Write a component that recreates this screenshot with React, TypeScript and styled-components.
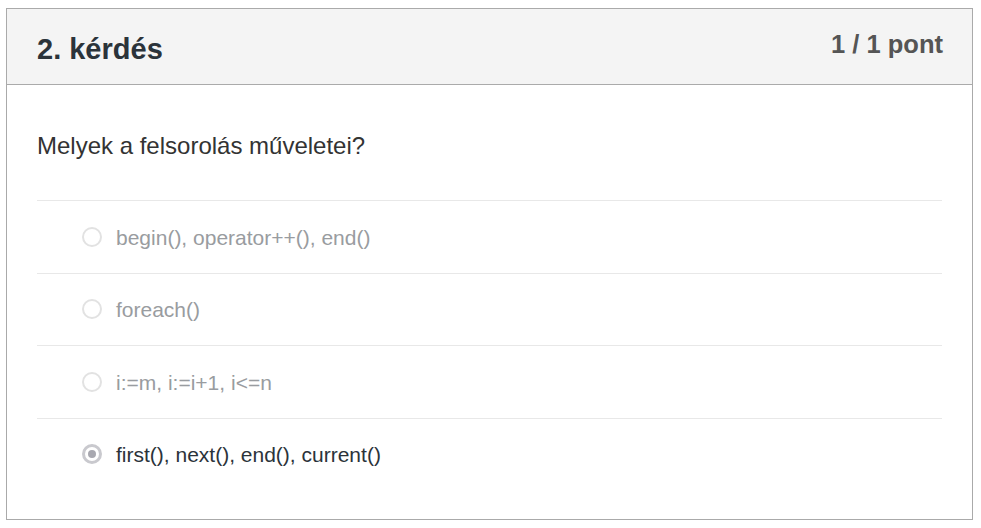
import React from "react";
import styled, { createGlobalStyle } from "styled-components";

const Global = createGlobalStyle`
  html, body { background: #ffffff; }
  body {
    margin: 8px 8px 8px 6px;
    font-family: "Liberation Sans", Arial, sans-serif;
  }
  * { box-sizing: border-box; }
`;

const Card = styled.section`
  border: 1px solid #aaaaaa;
  background: #ffffff;
`;

const Header = styled.header`
  height: 76px;
  background: #f4f4f4;
  border-bottom: 1px solid #aaaaaa;
  display: flex;
  justify-content: space-between;
  align-items: flex-start;
  padding: 20px 29px 0 30px;
`;

const Title = styled.h2`
  margin: 3px 0 0;
  font-size: 29px;
  line-height: 1.2;
  font-weight: 700;
  color: #2b333a;
`;

const Points = styled.div`
  font-size: 25.5px;
  line-height: 1.2;
  font-weight: 700;
  color: #555555;
`;

const Body = styled.div`
  padding: 43px 30px 29px 30px;
`;

const Question = styled.p`
  margin: 0 0 36px;
  font-size: 24px;
  line-height: 36px;
  color: #333333;
`;

const Options = styled.ul`
  list-style: none;
  margin: 0;
  padding: 0;
`;

const Option = styled.li<{ $selected?: boolean }>`
  height: 72.5px;
  border-top: 1px solid #e8e8e8;
  display: flex;
  align-items: center;
  gap: 14px;
  padding: 2px 0 0 45px;
  font-size: 21px;
  color: ${(p) => (p.$selected ? "#2b333a" : "#999ca0")};
`;

const Radio = styled.span<{ $checked?: boolean }>`
  flex: none;
  width: 20px;
  height: 20px;
  margin-top: -2px;
  border-radius: 50%;
  border: ${(p) => (p.$checked ? "3px solid #c9c9ce" : "2px solid #e2e2e2")};
  background: #ffffff;
  display: flex;
  align-items: center;
  justify-content: center;
`;

const Dot = styled.span`
  width: 8px;
  height: 8px;
  border-radius: 50%;
  background: #a8a8b0;
`;

const options = [
  { text: "begin(), operator++(), end()", selected: false },
  { text: "foreach()", selected: false },
  { text: "i:=m, i:=i+1, i<=n", selected: false },
  { text: "first(), next(), end(), current()", selected: true },
];

export default function App() {
  return (
    <>
      <Global />
      <Card>
        <Header>
          <Title>2. kérdés</Title>
          <Points>1 / 1 pont</Points>
        </Header>
        <Body>
          <Question>Melyek a felsorolás műveletei?</Question>
          <Options>
            {options.map((o) => (
              <Option key={o.text} $selected={o.selected}>
                <Radio $checked={o.selected}>{o.selected && <Dot />}</Radio>
                {o.text}
              </Option>
            ))}
          </Options>
        </Body>
      </Card>
    </>
  );
}
